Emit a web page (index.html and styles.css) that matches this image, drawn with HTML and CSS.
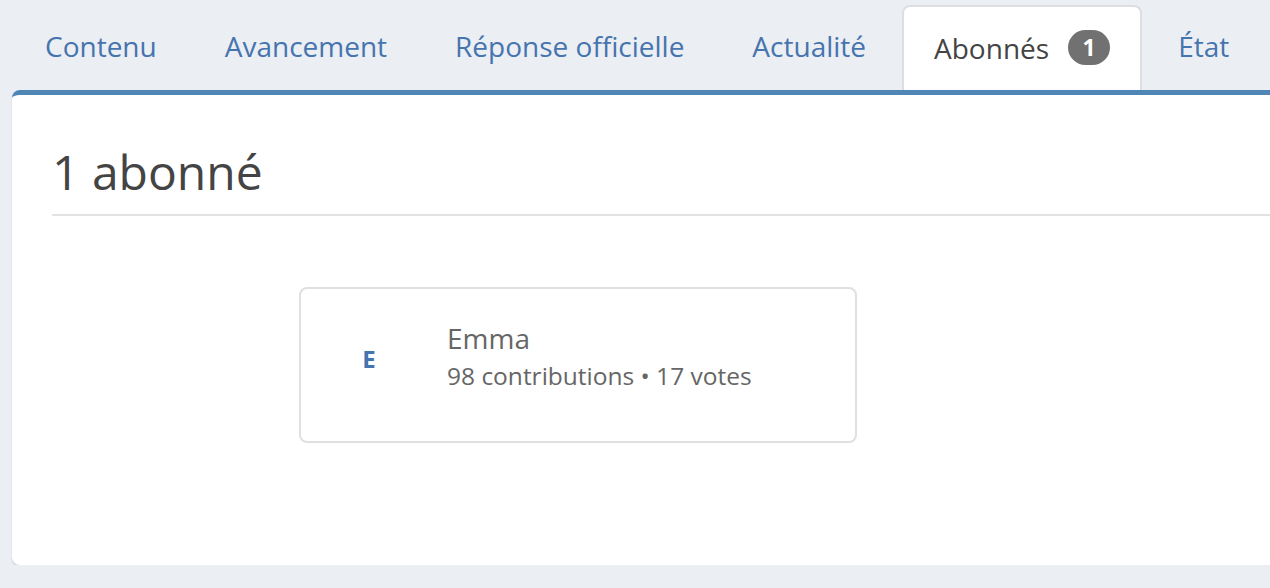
FILE: index.html
```html
<!DOCTYPE html>
<html lang="fr">
  <head>
    <meta charset="UTF-8" />
    <meta name="viewport" content="width=device-width, initial-scale=1.0" />
    <link rel="stylesheet" href="styles.css">
    <title>Abonnés</title>
  </head>
  <body>
    <div class="page">
      <ul class="tabs">
        <li class="tab"><a href="#">Contenu</a></li>
        <li class="tab"><a href="#">Avancement</a></li>
        <li class="tab"><a href="#">Réponse officielle</a></li>
        <li class="tab"><a href="#">Actualité</a></li>
        <li class="tab active"><a href="#">Abonnés <span class="badge">1</span></a></li>
        <li class="tab"><a href="#">État</a></li>
      </ul>

      <div class="panel">
        <h2 class="title">1 abonné</h2>

        <div class="followers">
          <div class="card">
            <div class="avatar">E</div>
            <div class="info">
              <div class="name">Emma</div>
              <div class="stats">98 contributions • 17 votes</div>
            </div>
          </div>
        </div>
      </div>
    </div>
  </body>
</html>
```

FILE: styles.css
```css
body {
  margin: 0;
  background: #ebeef3;
  font-family: "Open Sans", "Liberation Sans", sans-serif;
  overflow: hidden;
}
.page {
  padding: 5px 0 0 11px;
}
.tabs {
  display: flex;
  list-style: none;
  margin: 0;
  padding: 0;
  height: 85px;
}
.tab {
  display: flex;
  align-items: center;
  padding: 0 34px 4px;
  font-size: 28px;
}
.tab a {
  color: #4674af;
  text-decoration: none;
}
.tab.active {
  background: #fff;
  border: 2px solid #dcdee2;
  border-bottom: none;
  border-radius: 8px 8px 0 0;
  padding: 0 30px 2px 30px;
  margin-left: 2px;
  margin-right: 2px;
}
.tab.active a {
  color: #444;
  display: flex;
  align-items: center;
}
.badge {
  display: inline-block;
  margin-left: 19px;
  background: #717171;
  color: #fff;
  font-size: 23px;
  font-weight: bold;
  line-height: 35px;
  height: 35px;
  min-width: 42px;
  text-align: center;
  border-radius: 18px;
}
.panel {
  background: #fff;
  border-top: 5px solid #4f86b5;
  border-radius: 8px 0 0 8px;
  height: 470px;
  margin-left: 1px;
  margin-right: -20px;
  padding: 0 0 0 40px;
  box-shadow: 0 2px 2px rgba(0, 0, 0, 0.12);
}
.title {
  margin: 0;
  padding-top: 49px;
  padding-bottom: 15px;
  font-size: 48px;
  font-weight: normal;
  line-height: 55px;
  color: #444;
  border-bottom: 2px solid #e2e2e2;
}
.followers {
  padding: 71px 0 0 247px;
}
.card {
  display: flex;
  align-items: center;
  box-sizing: border-box;
  width: 558px;
  height: 156px;
  border: 2px solid #e0e0e0;
  border-radius: 8px;
}
.avatar {
  width: 136px;
  text-align: center;
  color: #4674af;
  font-weight: bold;
  font-size: 24px;
  margin-bottom: 14px;
}
.info {
  color: #666;
  margin-left: 10px;
  margin-bottom: 15px;
}
.name {
  font-size: 28px;
  line-height: 36px;
}
.stats {
  font-size: 24.5px;
  line-height: 40px;
}
```
